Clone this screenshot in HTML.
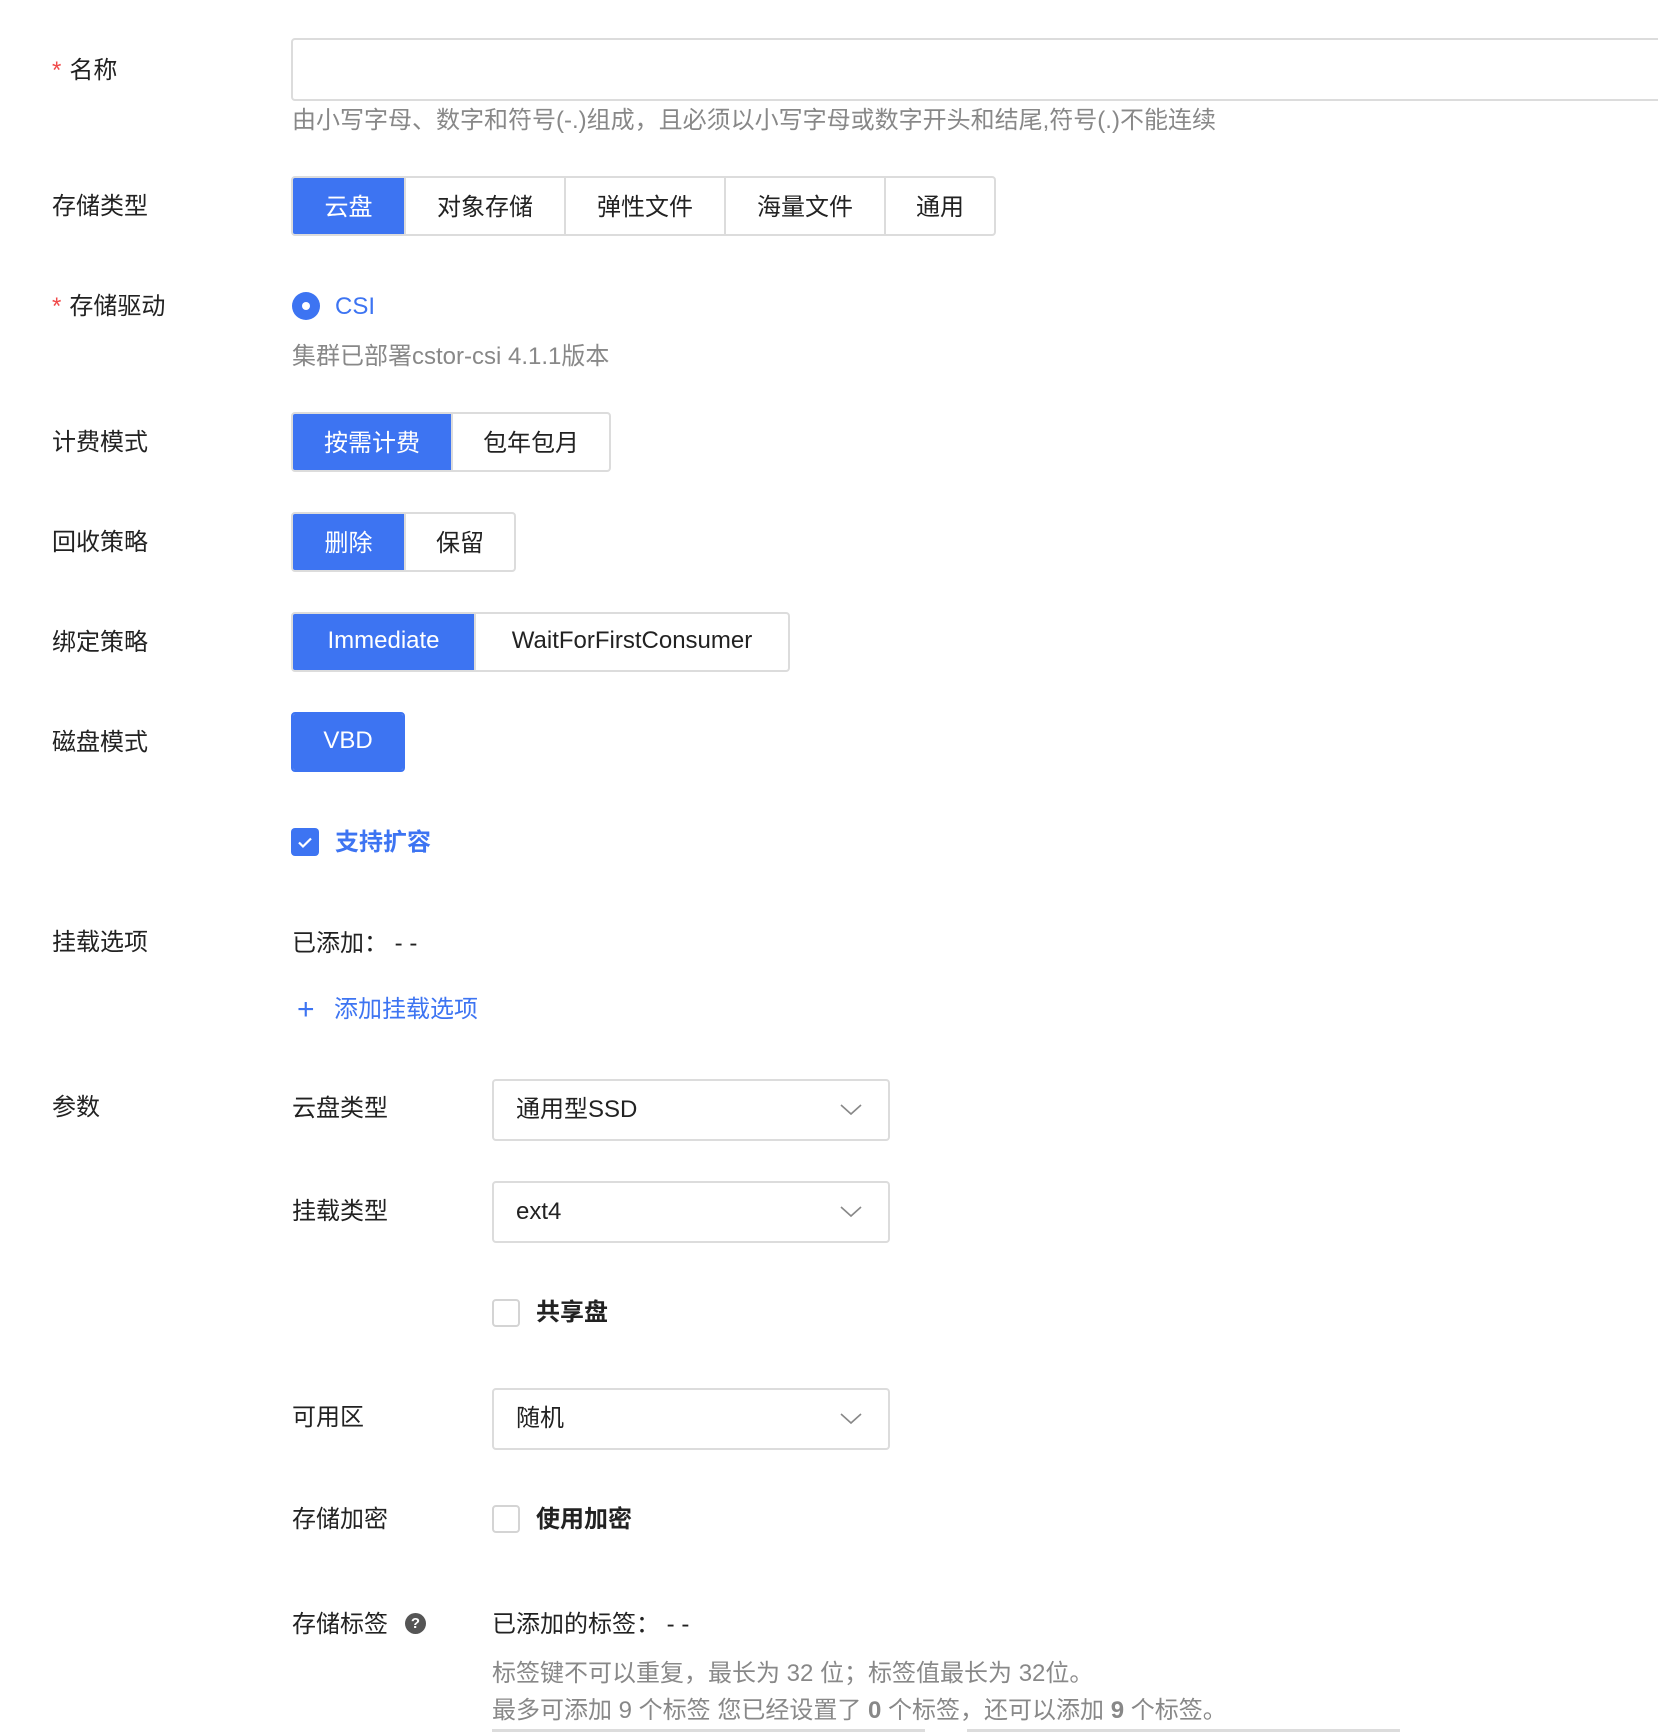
<!DOCTYPE html>
<html><head><meta charset="utf-8"><style>
*{box-sizing:border-box;margin:0;padding:0}
body{width:1658px;height:1732px;overflow:hidden;background:#fff;position:relative;font-family:"Liberation Sans","Noto Sans CJK SC",sans-serif;font-size:24px;color:#222}
.a{position:absolute;white-space:nowrap;line-height:30px;margin-top:2px}
.lb{left:52px}
.req{color:#f04a4a;margin-right:8px}
.hint{color:#888}
.seg{position:absolute;display:flex;border:2px solid #dcdcdc;border-radius:4px;overflow:hidden}
.seg div{display:flex;align-items:center;justify-content:center;border-left:2px solid #dcdcdc;height:100%;padding-bottom:3px}
.seg div:first-child{border-left:none}
.seg .on{background:#3d74f2;color:#fff}
.sel{position:absolute;left:492px;width:398px;height:62px;border:2px solid #dcdcdc;border-radius:4px;padding-left:22px;line-height:58px}
.sel svg{position:absolute;right:26px;top:22px}
.cb{position:absolute;width:28px;height:28px;border:2px solid #d4d4d4;border-radius:4px}
b{font-weight:bold}
</style></head><body>
<div class="a lb" style="top:54px"><span class="req">*</span>名称</div>
<div style="position:absolute;left:291px;top:38px;width:1400px;height:63px;border:2px solid #dcdcdc;border-radius:4px"></div>
<div class="a hint" style="left:292px;top:104px">由小写字母、数字和符号(-.)组成，且必须以小写字母或数字开头和结尾,符号(.)不能连续</div>

<div class="a lb" style="top:190px">存储类型</div>
<div class="seg" style="left:291px;top:176px;height:60px">
<div class="on" style="width:111px">云盘</div><div style="width:160px">对象存储</div><div style="width:160px">弹性文件</div><div style="width:160px">海量文件</div><div style="width:110px">通用</div></div>

<div class="a lb" style="top:290px"><span class="req">*</span>存储驱动</div>
<div style="position:absolute;left:292px;top:292px;width:28px;height:28px;border-radius:50%;background:#3d74f2"><div style="position:absolute;left:10px;top:10px;width:8px;height:8px;border-radius:50%;background:#fff"></div></div>
<div class="a" style="left:335px;top:290px;color:#3d74f2">CSI</div>
<div class="a hint" style="left:292px;top:340px">集群已部署cstor-csi 4.1.1版本</div>

<div class="a lb" style="top:426px">计费模式</div>
<div class="seg" style="left:291px;top:412px;height:60px"><div class="on" style="width:158px">按需计费</div><div style="width:158px">包年包月</div></div>

<div class="a lb" style="top:526px">回收策略</div>
<div class="seg" style="left:291px;top:512px;height:60px"><div class="on" style="width:111px">删除</div><div style="width:110px">保留</div></div>

<div class="a lb" style="top:626px">绑定策略</div>
<div class="seg" style="left:291px;top:612px;height:60px"><div class="on" style="width:181px">Immediate</div><div style="width:314px">WaitForFirstConsumer</div></div>

<div class="a lb" style="top:726px">磁盘模式</div>
<div class="seg" style="left:291px;top:712px;height:60px;border-color:#3d74f2"><div class="on" style="width:110px">VBD</div></div>

<div style="position:absolute;left:291px;top:828px;width:28px;height:28px;border-radius:4px;background:#3d74f2"><svg width="28" height="28" viewBox="0 0 28 28"><path d="M8 14.5l4 4 8-8" fill="none" stroke="#fff" stroke-width="2.2"/></svg></div>
<div class="a" style="left:335px;top:826px;color:#3d74f2;font-weight:bold">支持扩容</div>

<div class="a lb" style="top:926px">挂载选项</div>
<div class="a" style="left:292px;top:927px">已添加： - -</div>
<div class="a" style="left:297px;top:993px;color:#3d74f2"><span style="font-size:30px;font-weight:300;margin-right:10px">+</span></div>
<div class="a" style="left:334px;top:993px;color:#3d74f2">添加挂载选项</div>

<div class="a lb" style="top:1091px">参数</div>
<div class="a" style="left:292px;top:1092px">云盘类型</div>
<div class="sel" style="top:1079px">通用型SSD<svg width="22" height="14"><path d="M1 2l10 9 10-9" fill="none" stroke="#888" stroke-width="1.6"/></svg></div>
<div class="a" style="left:292px;top:1195px">挂载类型</div>
<div class="sel" style="top:1181px">ext4<svg width="22" height="14"><path d="M1 2l10 9 10-9" fill="none" stroke="#888" stroke-width="1.6"/></svg></div>
<div class="cb" style="left:492px;top:1299px"></div>
<div class="a" style="left:536px;top:1296px;font-weight:bold">共享盘</div>
<div class="a" style="left:292px;top:1401px">可用区</div>
<div class="sel" style="top:1388px">随机<svg width="22" height="14"><path d="M1 2l10 9 10-9" fill="none" stroke="#888" stroke-width="1.6"/></svg></div>
<div class="a" style="left:292px;top:1503px">存储加密</div>
<div class="cb" style="left:492px;top:1505px"></div>
<div class="a" style="left:536px;top:1503px;font-weight:bold">使用加密</div>
<div class="a" style="left:292px;top:1608px">存储标签</div>
<div style="position:absolute;left:405px;top:1613px;width:21px;height:21px;border-radius:50%;background:#555;color:#fff;font-size:15px;font-weight:bold;text-align:center;line-height:21px">?</div>
<div class="a" style="left:492px;top:1608px">已添加的标签： - -</div>
<div class="a hint" style="left:492px;top:1657px">标签键不可以重复，最长为 32 位；标签值最长为 32位。</div>
<div class="a hint" style="left:492px;top:1694px">最多可添加 9 个标签 您已经设置了 <b>0</b> 个标签，还可以添加 <b>9</b> 个标签。</div>
<div style="position:absolute;left:492px;top:1729px;width:433px;height:3px;background:#dcdcdc"></div>
<div style="position:absolute;left:967px;top:1729px;width:433px;height:3px;background:#dcdcdc"></div>
</body></html>
